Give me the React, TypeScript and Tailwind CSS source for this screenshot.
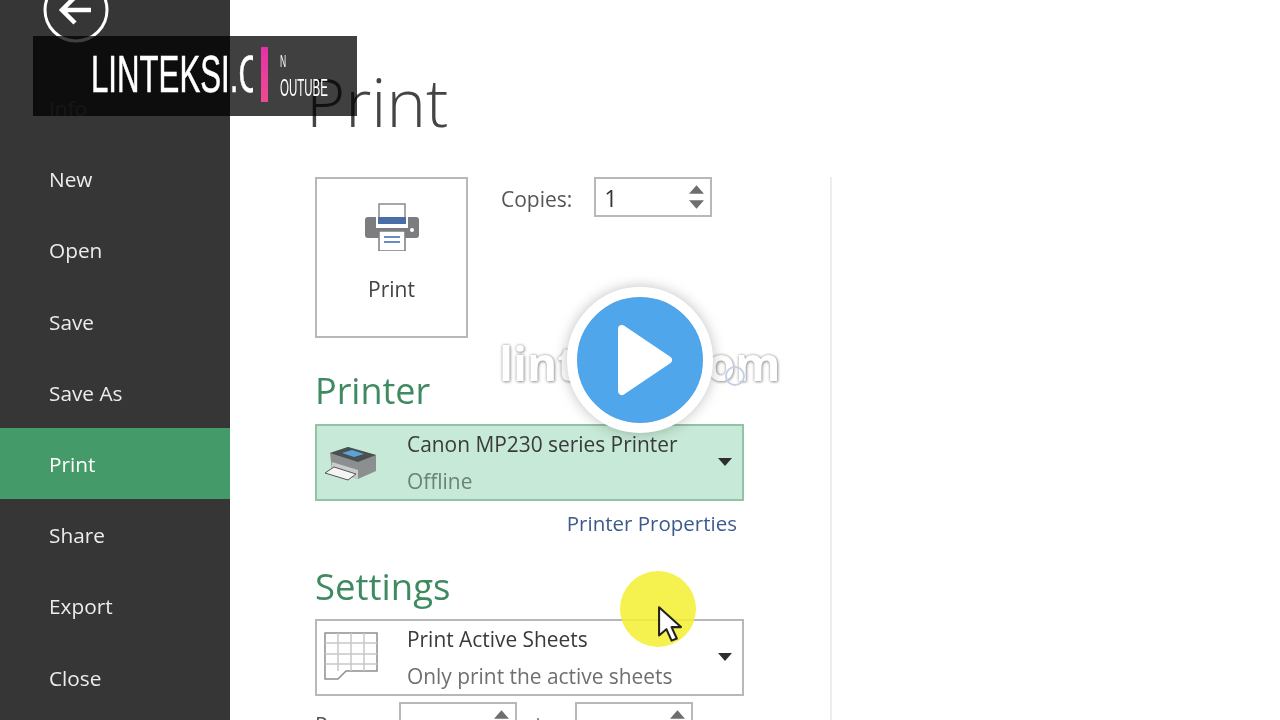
import type { ReactNode } from "react";

const navItems = ["Info", "New", "Open", "Save", "Save As", "Print", "Share", "Export", "Close"];

function Caret({ className }: { className: string }) {
  return (
    <svg viewBox="0 0 14 8" className={className}>
      <path d="M0 0h14L7 8z" fill="currentColor" />
    </svg>
  );
}

function Spinner({ value, width }: { value?: string; width: string }) {
  return (
    <div className={`flex h-[40px] items-start justify-between border-2 border-[#b8b8b8] bg-white ${width}`}>
      <span className="pl-[8px] pt-[2px] text-[23px] leading-[34px] text-[#333]">{value}</span>
      <div className="flex flex-col gap-[6px] pr-[6px] pt-[6px] text-[#6e6e6e]">
        <Caret className="h-[9px] w-[15px] rotate-180" />
        <Caret className="h-[9px] w-[15px]" />
      </div>
    </div>
  );
}

function PrinterIcon() {
  return (
    <svg viewBox="0 0 54 48" className="h-[48px] w-[54px]">
      <rect x="14" y="1" width="26" height="20" fill="#fff" stroke="#8a8a8a" strokeWidth="1.5" />
      <path d="M3 14h48a3 3 0 0 1 3 3v15a3 3 0 0 1-3 3H3a3 3 0 0 1-3-3V17a3 3 0 0 1 3-3z" fill="#7d7d80" />
      <rect x="11" y="14" width="32" height="11" fill="#fff" />
      <rect x="13" y="14" width="28" height="7" fill="#4a6fa8" />
      <rect x="14" y="28" width="26" height="20" fill="#fff" stroke="#7d7d80" strokeWidth="1.5" />
      <path d="M19 34h16M19 39h16" stroke="#6d8cc0" strokeWidth="2" />
      <circle cx="47" cy="27" r="2" fill="#fff" />
    </svg>
  );
}

function CanonIcon() {
  return (
    <svg viewBox="0 0 54 36" className="h-[36px] w-[54px]">
      <path d="M6 8 24 2l28 8v16l-18 8L8 26z" fill="#8b8f8f" />
      <path d="M6 8 24 2l28 8-18 7z" fill="#4a4f50" />
      <path d="M18 8l10-3 12 4-10 3z" fill="#5aa3d8" />
      <path d="M8 17l26 8v9L8 26z" fill="#c8cccb" />
      <path d="M1 28l9-6 22 7-8 6z" fill="#f4f4f4" stroke="#555" strokeWidth="1" />
    </svg>
  );
}

function SheetIcon() {
  return (
    <svg viewBox="0 0 54 48" className="-mt-[4px] h-[48px] w-[54px]" fill="none" stroke="#8f8f8f" strokeWidth="1.5">
      <path d="M1 1h52v38H22l-8 8H1z" />
      <path d="M1 11h52M1 22h52M1 32h52M14 1v38M27 1v38M40 1v38" stroke="#c8c8c8" />
    </svg>
  );
}

function Dropdown({ title, sub, icon, green }: { title: string; sub: string; icon: ReactNode; green?: boolean }) {
  return (
    <div
      className={`flex h-[77px] w-[429px] items-center border-2 pl-[7px] pr-[10px] ${
        green ? "border-[#93c2a6] bg-[#c6ead7]" : "border-[#b8b8b8] bg-white"
      }`}
    >
      <div className="flex w-[83px] shrink-0 items-center">{icon}</div>
      <div className="flex-1">
        <div className="text-[20.9px] leading-[37px] text-[#3a3a3a]">{title}</div>
        <div className={`text-[20.9px] leading-[37px] ${green ? "text-[#6f8079]" : "text-[#6f6f6f]"}`}>{sub}</div>
      </div>
      <Caret className="-mt-[2px] h-[8px] w-[14px] text-[#2e2e2e]" />
    </div>
  );
}

export default function App() {
  return (
    <div className="relative flex h-[720px] w-[1280px] overflow-hidden bg-white blur-[0.6px] [font-family:'Open_Sans',sans-serif]">
      {/* backstage nav */}
      <aside className="flex w-[230px] shrink-0 flex-col bg-[#363636]">
        <div className="-mt-[23px] h-[95px] shrink-0 pl-[43px]">
          <svg viewBox="0 0 66 66" className="h-[66px] w-[66px]" fill="none" stroke="#fff">
            <circle cx="33" cy="33" r="31" strokeWidth="3" />
            <path d="M20 33h28M32 20 19 33l13 13" strokeWidth="4.5" />
          </svg>
        </div>
        {navItems.map((item) => (
          <div
            key={item}
            className={`flex h-[71.2px] shrink-0 items-center pl-[49px] pt-[2px] text-[20.8px] ${
              item === "Print" ? "bg-[#459a69] text-white" : item === "Info" ? "text-[#5c5c5c]" : "text-[#ececec]"
            }`}
          >
            {item}
          </div>
        ))}
      </aside>

      <main className="flex-1 pl-[85px]">
        <h1 className="-ml-[9px] mt-[54px] h-[123px] text-[67px] font-light leading-[94px] text-[#444]">Print</h1>
        <div className="flex w-[517px] border-r-2 border-[#ededed] pb-[200px]">
          <div className="w-[429px] shrink-0">
            <div className="flex items-start">
              <div className="flex h-[161px] w-[153px] flex-col items-center border-2 border-[#b8b8b8] pt-[24px]">
                <PrinterIcon />
                <span className="mt-[23px] text-[21px] font-medium leading-[30px] text-[#444]">Print</span>
              </div>
              <span className="ml-[33px] text-[21px] leading-[44px] text-[#555]">Copies:</span>
              <div className="ml-[22px]">
                <Spinner value="1" width="w-[118px]" />
              </div>
            </div>
            <h2 className="mt-[29px] text-[36px] leading-[48px] text-[#3f8a60]">Printer</h2>
            <div className="mt-[9px]">
              <Dropdown title="Canon MP230 series Printer" sub="Offline" icon={<CanonIcon />} green />
            </div>
            <div className="mt-[7px] pr-[7px] text-right text-[20.5px] leading-[30px] text-[#3d5a8f]">Printer Properties</div>
            <h2 className="mt-[24px] text-[36.5px] leading-[48px] text-[#3f8a60]">Settings</h2>
            <div className="mt-[9px]">
              <Dropdown title="Print Active Sheets" sub="Only print the active sheets" icon={<SheetIcon />} />
            </div>
            <div className="mt-[6px] flex items-start">
              <span className="w-[84px] pt-[6px] text-[21px] leading-[34px] text-[#555]">Pages:</span>
              <Spinner width="w-[118px]" />
              <span className="w-[58px] pl-[18px] pt-[6px] text-[21px] leading-[34px] text-[#555]">to</span>
              <Spinner width="w-[118px]" />
            </div>
          </div>
        </div>
      </main>

      {/* channel banner */}
      <div className="absolute left-[33px] top-[36px] h-[80px] w-[324px] bg-black/75">
        <div className="absolute left-[58px] top-[8px] h-[60px] w-[162px] overflow-hidden">
          <span className="block origin-left scale-x-[0.6] whitespace-nowrap text-[52px] leading-[60px] text-white [-webkit-text-stroke:0.6px_#fff] [font-family:'Liberation_Sans',sans-serif]">
            LINTEKSI.COM
          </span>
        </div>
        <div className="absolute left-[228px] top-[11px] h-[55px] w-[7px] bg-gradient-to-b from-[#e62fa8] to-[#ee4a90]" />
        <div className="absolute left-[247px] top-[40px] h-[24px] w-[50px] overflow-hidden">
          <span className="block origin-left scale-x-[0.5] whitespace-nowrap text-[23px] leading-[24px] text-white [font-family:'Liberation_Sans',sans-serif]">
            OUTUBE
          </span>
        </div>
        <div className="absolute left-[247px] top-[18px] h-[16px] w-[7px] overflow-hidden">
          <span className="block origin-left scale-x-[0.5] text-[17px] leading-[16px] text-white [font-family:'Liberation_Sans',sans-serif]">N</span>
        </div>
      </div>

      {/* site watermark */}
      <div className="absolute left-[499px] top-[333px] text-[46px] font-bold leading-[60px] text-white [text-shadow:0_0_3px_#999,1px_1px_3px_#aaa]">
        linteksi.com
      </div>
      <div className="absolute left-[725px] top-[366px] h-[20px] w-[20px] rounded-full border-2 border-[#c5cfe6]" />

      {/* play button */}
      <div className="absolute left-[567px] top-[287px] flex h-[146px] w-[146px] items-center justify-center rounded-full border-[10px] border-white bg-[#4fa6ea] shadow-[0_0_14px_rgba(0,0,0,0.25)]">
        <svg viewBox="0 0 56 72" className="ml-[10px] h-[72px] w-[56px]">
          <path d="M5 5 51 36 5 67z" fill="#fff" stroke="#fff" strokeWidth="8" strokeLinejoin="round" />
        </svg>
      </div>

      {/* cursor highlight */}
      <div className="absolute left-[620px] top-[571px] h-[76px] w-[76px] rounded-full bg-[#f3ee30]/85" />
      <svg viewBox="0 0 24 36" className="absolute left-[657px] top-[606px] h-[38px] w-[25px]">
        <path d="M2 1v27l7-6 5 11 5-2-5-11h9z" fill="#fff" stroke="#222" strokeWidth="2" strokeLinejoin="round" />
      </svg>
    </div>
  );
}
